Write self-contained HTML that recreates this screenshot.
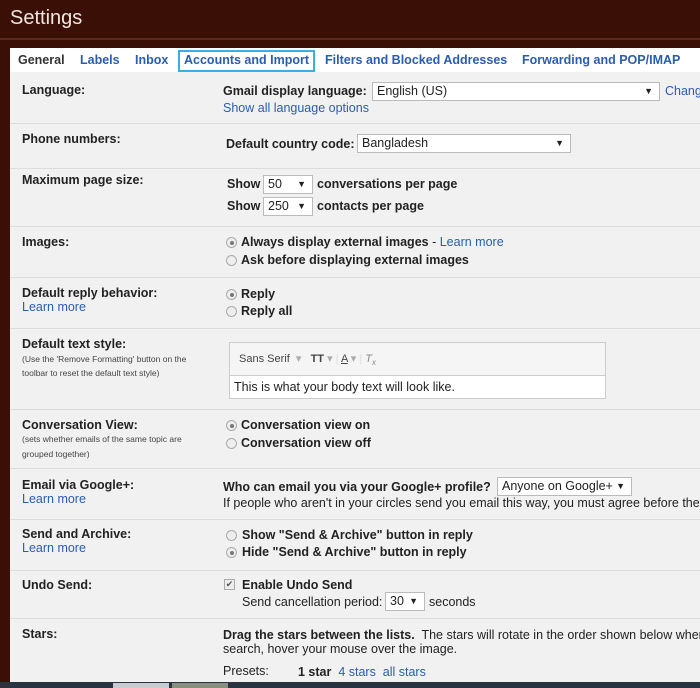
<!DOCTYPE html>
<html><head><meta charset="utf-8"><style>
*{margin:0;padding:0;box-sizing:border-box}
body{width:700px;height:688px;overflow:hidden;background:#3a0f05;font-family:"Liberation Sans",sans-serif;font-size:12.5px;color:#222;position:relative}
.a{position:absolute;white-space:nowrap}
.b{font-weight:bold}
.l{color:#2a5db0}
.s{font-size:8.5px;color:#444;line-height:16px}
.hr{position:absolute;left:10px;width:690px;height:1px;background:#ddd}
.sel{position:absolute;background:#fff;border:1px solid #bbb;height:19px;padding:0 4px;font-size:12.5px;line-height:17px;overflow:hidden}
.sel i{position:absolute;right:6px;top:0;font-style:normal;font-size:9px;line-height:17px}
.r{position:absolute;width:11px;height:11px;border-radius:50%;border:1px solid #aaa;background:#eee}
.r.on:after{content:"";position:absolute;left:2.5px;top:2.5px;width:4px;height:4px;border-radius:50%;background:#777}
</style></head><body>
<div class="a" style="left:10px;top:7px;font-size:20px;color:#f0e6e0">Settings</div>
<div style="position:absolute;left:0;top:38px;width:700px;height:2px;background:#5a2a1a"></div>
<div style="position:absolute;left:10px;top:48px;width:690px;height:634px;background:#f1f1f1"></div>
<div style="position:absolute;left:10px;top:48px;width:690px;height:24px;background:#fff"></div>
<div class="a b" style="left:18px;top:53px;color:#333">General</div>
<div class="a b l" style="left:80px;top:53px">Labels</div>
<div class="a b l" style="left:135px;top:53px">Inbox</div>
<div style="position:absolute;left:178px;top:50px;width:137px;height:22px;border:2px solid #3ab0e0"></div>
<div class="a b l" style="left:184px;top:53px">Accounts and Import</div>
<div class="a b l" style="left:325px;top:53px">Filters and Blocked Addresses</div>
<div class="a b l" style="left:522px;top:53px">Forwarding and POP/IMAP</div>

<div class="a b" style="left:22px;top:83px">Language:</div>
<div class="a b" style="left:223px;top:84px">Gmail display language:</div>
<div class="sel" style="left:372px;top:82px;width:288px">English (US)<i>▼</i></div>
<div class="a l" style="left:665px;top:84px">Chang</div>
<div class="a l" style="left:223px;top:101px">Show all language options</div>
<div class="hr" style="top:123px"></div>

<div class="a b" style="left:22px;top:132px">Phone numbers:</div>
<div class="a b" style="left:226px;top:137px">Default country code:</div>
<div class="sel" style="left:357px;top:134px;width:214px">Bangladesh<i>▼</i></div>
<div class="hr" style="top:168px"></div>

<div class="a b" style="left:22px;top:173px">Maximum page size:</div>
<div class="a b" style="left:227px;top:177px">Show</div>
<div class="sel" style="left:263px;top:175px;width:50px">50<i>▼</i></div>
<div class="a b" style="left:317px;top:177px">conversations per page</div>
<div class="a b" style="left:227px;top:199px">Show</div>
<div class="sel" style="left:263px;top:197px;width:50px">250<i>▼</i></div>
<div class="a b" style="left:317px;top:199px">contacts per page</div>
<div class="hr" style="top:226px"></div>

<div class="a b" style="left:22px;top:235px">Images:</div>
<div class="r on" style="left:226px;top:237px"></div>
<div class="a b" style="left:241px;top:235px">Always display external images <span style="font-weight:normal">- <span class="l">Learn more</span></span></div>
<div class="r" style="left:226px;top:255px"></div>
<div class="a b" style="left:241px;top:253px">Ask before displaying external images</div>
<div class="hr" style="top:277px"></div>

<div class="a b" style="left:22px;top:286px">Default reply behavior:</div>
<div class="a l" style="left:22px;top:300px">Learn more</div>
<div class="r on" style="left:226px;top:289px"></div>
<div class="a b" style="left:241px;top:287px">Reply</div>
<div class="r" style="left:226px;top:306px"></div>
<div class="a b" style="left:241px;top:304px">Reply all</div>
<div class="hr" style="top:328px"></div>

<div class="a b" style="left:22px;top:337px">Default text style:</div>
<div class="a s" style="left:22px;top:351px">(Use the 'Remove Formatting' button on the</div>
<div class="a s" style="left:22px;top:365px">toolbar to reset the default text style)</div>
<div style="position:absolute;left:229px;top:342px;width:377px;height:57px;border:1px solid #ccc;background:#f5f5f5"></div>
<div style="position:absolute;left:229px;top:375px;width:377px;height:24px;border:1px solid #ccc;background:#fff"></div>
<div class="a" style="left:239px;top:352px;font-size:11px;color:#444">Sans Serif &nbsp;<span style="color:#aaa">▾</span> &nbsp; <b>TT</b> <span style="color:#aaa">▾</span> <span style="color:#ddd">|</span> <u>A</u> <span style="color:#aaa">▾</span> <span style="color:#ddd">|</span> <i style="color:#888">T<sub style="font-size:8px">x</sub></i></div>
<div class="a" style="left:234px;top:380px">This is what your body text will look like.</div>
<div class="hr" style="top:409px"></div>

<div class="a b" style="left:22px;top:418px">Conversation View:</div>
<div class="a s" style="left:22px;top:431px">(sets whether emails of the same topic are</div>
<div class="a s" style="left:22px;top:446px">grouped together)</div>
<div class="r on" style="left:226px;top:420px"></div>
<div class="a b" style="left:241px;top:418px">Conversation view on</div>
<div class="r" style="left:226px;top:438px"></div>
<div class="a b" style="left:241px;top:436px">Conversation view off</div>
<div class="hr" style="top:468px"></div>

<div class="a b" style="left:22px;top:478px">Email via Google+:</div>
<div class="a l" style="left:22px;top:492px">Learn more</div>
<div class="a b" style="left:223px;top:480px">Who can email you via your Google+ profile?</div>
<div class="sel" style="left:497px;top:477px;width:135px">Anyone on Google+<i>▼</i></div>
<div class="a" style="left:223px;top:496px">If people who aren't in your circles send you email this way, you must agree before they</div>
<div class="hr" style="top:519px"></div>

<div class="a b" style="left:22px;top:527px">Send and Archive:</div>
<div class="a l" style="left:22px;top:541px">Learn more</div>
<div class="r" style="left:226px;top:530px"></div>
<div class="a b" style="left:242px;top:528px">Show "Send &amp; Archive" button in reply</div>
<div class="r on" style="left:226px;top:547px"></div>
<div class="a b" style="left:242px;top:545px">Hide "Send &amp; Archive" button in reply</div>
<div class="hr" style="top:570px"></div>

<div class="a b" style="left:22px;top:578px">Undo Send:</div>
<div style="position:absolute;left:224px;top:579px;width:11px;height:11px;border:1px solid #aaa;background:#eee;font-size:9px;line-height:9px;text-align:center;color:#555">✔</div>
<div class="a b" style="left:242px;top:578px">Enable Undo Send</div>
<div class="a" style="left:242px;top:595px">Send cancellation period:</div>
<div class="sel" style="left:385px;top:592px;width:40px">30<i>▼</i></div>
<div class="a" style="left:429px;top:595px">seconds</div>
<div class="hr" style="top:618px"></div>

<div class="a b" style="left:22px;top:627px">Stars:</div>
<div class="a" style="left:223px;top:628px"><b>Drag the stars between the lists.</b>&nbsp; The stars will rotate in the order shown below when</div>
<div class="a" style="left:223px;top:642px">search, hover your mouse over the image.</div>
<div class="a" style="left:223px;top:664px">Presets:</div>
<div class="a" style="left:298px;top:665px"><b>1 star</b> &nbsp;<span class="l">4 stars</span> &nbsp;<span class="l">all stars</span></div>

<div style="position:absolute;left:0;top:682px;width:700px;height:6px;background:#2a3440"></div>
<div style="position:absolute;left:113px;top:683px;width:56px;height:5px;background:#c8ccd0"></div>
<div style="position:absolute;left:172px;top:683px;width:56px;height:5px;background:#8a8f80"></div>
</body></html>
